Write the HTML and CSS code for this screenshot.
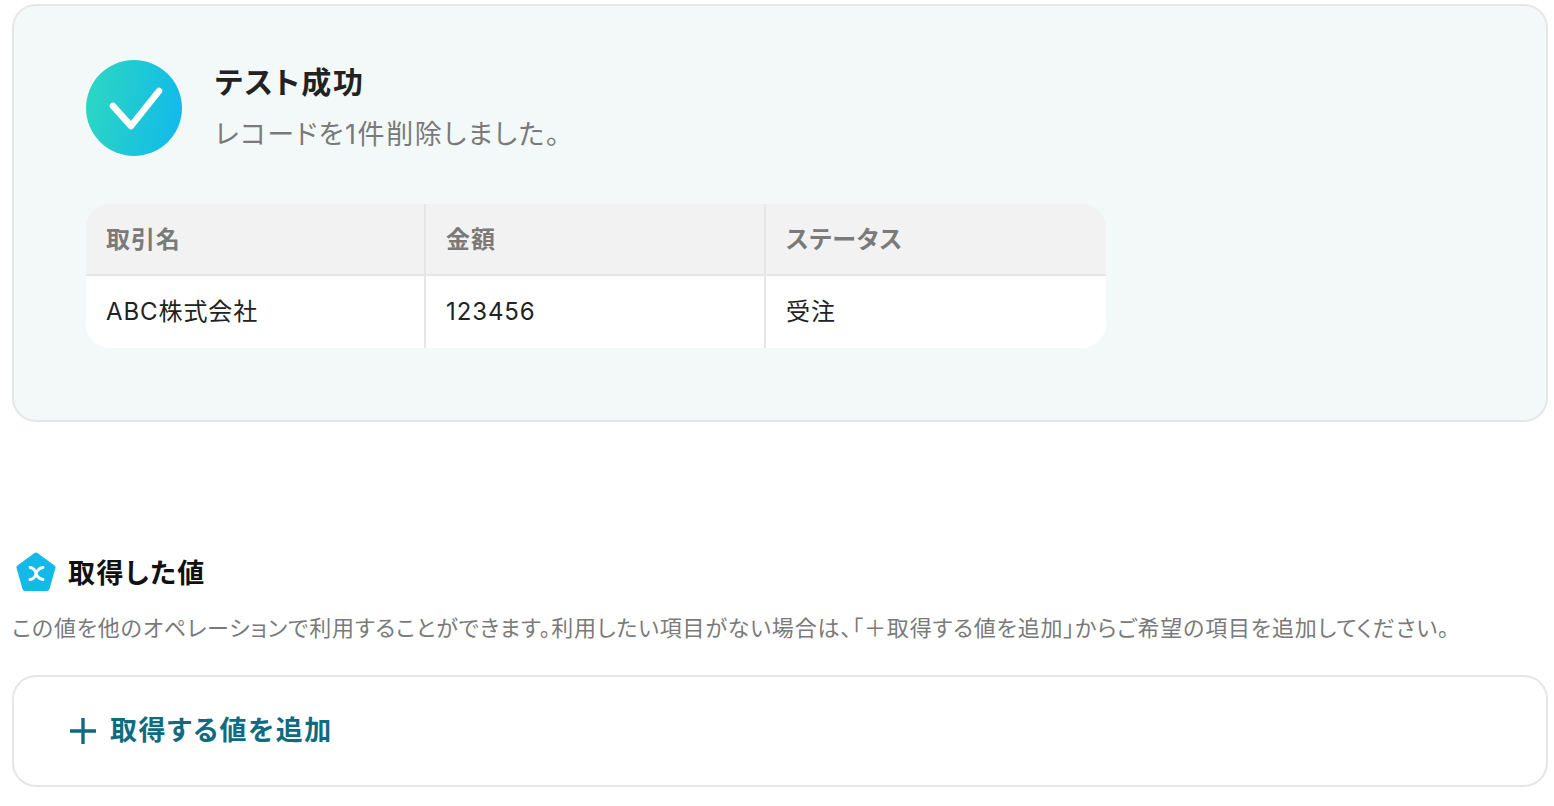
FILE: index.html
```html
<!DOCTYPE html>
<html lang="ja">
<head>
    <meta charset="UTF-8">
    <meta name="viewport" content="width=device-width, initial-scale=1.0">
    <title>テスト成功</title>
    <link rel="stylesheet" href="styles.css">
</head>
<body>

<div class="result-card">
    <div class="result-head">
        <div class="check-icon">
            <svg width="96" height="96" viewBox="0 0 96 96" fill="none">
                <path d="M27 46 L45 66 L73 31" stroke="#fff" stroke-width="6.5" stroke-linecap="round" stroke-linejoin="round"/>
            </svg>
        </div>
        <div class="result-text">
            <div class="result-title">テスト成功</div>
            <div class="result-sub">レコードを1件削除しました。</div>
        </div>
    </div>

    <table class="record-table">
        <thead>
            <tr>
                <th>取引名</th>
                <th>金額</th>
                <th>ステータス</th>
            </tr>
        </thead>
        <tbody>
            <tr>
                <td>ABC株式会社</td>
                <td>123456</td>
                <td>受注</td>
            </tr>
        </tbody>
    </table>
</div>

<div class="values-head">
    <svg class="pentagon" width="40" height="40" viewBox="0 0 40 40" fill="none">
        <path d="M20 3 L37 15.5 L31 36.5 L9 36.5 L3 15.5 Z" fill="#14b9e8" stroke="#14b9e8" stroke-width="5" stroke-linejoin="round"/>
        <path d="M14 15.5 C18 16 19.5 19 20 21.5 C19.5 24 18 27 14 27.5 M27 15.5 C23 16 21 19 20 21.5 C21 24 23 27 27 27.5" stroke="#fff" stroke-width="2.8" stroke-linecap="round"/>
    </svg>
    <h2 class="values-title">取得した値</h2>
</div>
<p class="values-desc">この値を他のオペレーションで利用することができます。利用したい項目がない場合は、「＋取得する値を追加」からご希望の項目を追加してください。</p>

<div class="add-box">
    <svg width="26" height="26" viewBox="0 0 26 26" fill="none">
        <path d="M13 0 V26 M0 13 H26" stroke="#0e6b80" stroke-width="3.4"/>
    </svg>
    <span class="add-label">取得する値を追加</span>
</div>

</body>
</html>
```

FILE: styles.css
```css
body {
    font-family: Inter, "Noto Sans CJK JP", sans-serif;
    margin: 0;
    padding: 4px 6px 0 12px;
    background: #fff;
    color: #222;
    font-feature-settings: "palt";
}

.result-card {
    height: 418px;
    box-sizing: border-box;
    padding: 54px 72px 0;
    background: #f3f9f9;
    border: 2px solid #e6e6e6;
    border-radius: 24px;
}
.result-head {
    display: flex;
    gap: 33px;
    align-items: center;
}
.check-icon {
    width: 96px;
    height: 96px;
    border-radius: 50%;
    background: linear-gradient(100deg, #2ed8c0, #10b8ec);
}
.result-title {
    font-size: 30px;
    font-weight: 700;
    letter-spacing: 1.7px;
    line-height: 40px;
}
.result-sub {
    margin-top: 13px;
    font-size: 27px;
    letter-spacing: 1.55px;
    color: #7a7a7a;
    line-height: 40px;
}

.record-table {
    width: 1020px;
    margin-top: 48px;
    border-collapse: separate;
    border-spacing: 0;
    table-layout: fixed;
    font-size: 24px;
    letter-spacing: 0.9px;
    line-height: 30px;
}
.record-table th,
.record-table td {
    box-sizing: border-box;
    padding: 0 20px;
    text-align: left;
    border-right: 2px solid #e6e6e6;
}
.record-table th {
    height: 72px;
    padding-top: 2px;
    background: #f2f2f2;
    color: #7a7a7a;
    font-weight: 700;
    border-bottom: 2px solid #e6e6e6;
}
.record-table td {
    height: 72px;
    background: #fff;
}
.record-table th:last-child,
.record-table td:last-child {
    border-right: none;
}
.record-table th:first-child { border-top-left-radius: 24px; }
.record-table th:last-child { border-top-right-radius: 24px; }
.record-table td:first-child { border-bottom-left-radius: 24px; }
.record-table td:last-child { border-bottom-right-radius: 24px; }

.values-head {
    display: flex;
    align-items: flex-start;
    gap: 12px;
    margin-top: 130px;
    padding-left: 4px;
}
.values-title {
    margin: 0;
    font-size: 27px;
    font-weight: 700;
    letter-spacing: 1.45px;
    line-height: 44px;
    color: #111;
}
.values-desc {
    margin: 16px 0 0;
    font-size: 22px;
    letter-spacing: 0.83px;
    line-height: 32px;
    color: #7a7a7a;
}

.add-box {
    display: flex;
    align-items: center;
    gap: 14px;
    height: 112px;
    box-sizing: border-box;
    margin-top: 31px;
    padding-left: 56px;
    background: #fff;
    border: 2px solid #e6e6e6;
    border-radius: 24px;
}
.add-label {
    font-size: 27px;
    font-weight: 700;
    letter-spacing: 1.6px;
    line-height: 40px;
    color: #0e6b80;
}
```
